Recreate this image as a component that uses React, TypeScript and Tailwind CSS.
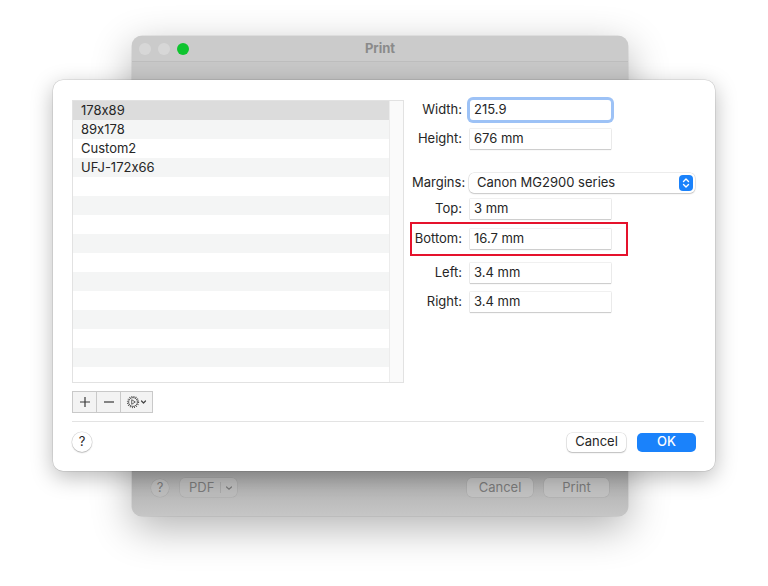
import React from "react";

const rows = ["178x89", "89x178", "Custom2", "UFJ-172x66"];

function Field({ value, focused }: { value: string; focused?: boolean }) {
  return (
    <div
      className={
        "w-[141px] h-[20px] flex items-center pl-[4px] bg-white text-[13px] text-[#262626] " +
        (focused
          ? "rounded-[3px] shadow-[0_0_0_3px_#9dc2f6]"
          : "shadow-[0_0_0_0.5px_rgba(0,0,0,0.12),0_1px_1px_rgba(0,0,0,0.14)]")
      }
    >
      {value}
    </div>
  );
}

function Row({
  label,
  children,
  boxed,
  className = "",
}: {
  label: string;
  children: React.ReactNode;
  boxed?: boolean;
  className?: string;
}) {
  return (
    <div
      className={
        "flex items-center border-2 " +
        (boxed ? "border-[#e5122c] w-[218px] py-[5px]" : "border-transparent") +
        " " +
        className
      }
    >
      <div className="w-[50px] text-right text-[13px] text-[#262626] whitespace-nowrap">{label}</div>
      <div className="ml-[8px]">{children}</div>
    </div>
  );
}

function GearIcon() {
  return (
    <svg width="22" height="14" viewBox="0 0 22 14">
      <circle cx="7" cy="7" r="5.5" fill="none" stroke="#444" strokeWidth="1.3" strokeDasharray="0.9 1.25" />
      <circle cx="7" cy="7" r="4.4" fill="none" stroke="#444" strokeWidth="0.8" />
      <path d="M5.7 4.7 L9.3 7 L5.7 9.3 Z" fill="none" stroke="#444" strokeWidth="0.8" strokeLinejoin="round" />
      <path d="M15.5 6 L17.5 8 L19.5 6" fill="none" stroke="#444" strokeWidth="1.2" strokeLinecap="round" strokeLinejoin="round" />
    </svg>
  );
}

export default function App() {
  const listRows = Array.from({ length: 15 }, (_, i) => i);
  return (
    <div
      className="relative w-[768px] h-[586px] bg-white overflow-hidden [font-feature-settings:'calt'_0]"
      style={{ fontFamily: "Inter, 'Noto Sans', 'Liberation Sans', sans-serif" }}
    >
      {/* back window */}
      <div className="absolute left-[132px] top-[36px] w-[496px] h-[480px] rounded-[10px] bg-[#c7c7c7] shadow-[0_12px_40px_rgba(0,0,0,0.3),0_0_0_0.5px_rgba(0,0,0,0.12)] flex flex-col overflow-hidden">
        <div className="h-[26px] flex items-center relative bg-[#cbcbcb] border-b border-[#bdbdbd] px-[7px] gap-[7px]">
          <div className="w-[12px] h-[12px] rounded-full bg-[#d7d7d7]" />
          <div className="w-[12px] h-[12px] rounded-full bg-[#d7d7d7]" />
          <div className="w-[12px] h-[12px] rounded-full bg-[#0ec42f]" />
          <div className="absolute inset-0 flex items-center justify-center text-[13px] font-bold text-[#8a8a8a]">
            Print
          </div>
        </div>
        <div className="flex-1" />
        <div className="h-[52px] flex items-end pb-[19px] px-[19px] bg-gradient-to-b from-[#a6a6a6] to-[#c6c6c6]">
          <div className="w-[18px] h-[18px] rounded-full bg-[#bdbdbd] shadow-[0_0_0_0.5px_rgba(0,0,0,0.08)] flex items-center justify-center text-[13px] text-[#7a7a7a]">
            ?
          </div>
          <div className="ml-[11px] w-[57px] h-[19px] rounded-[5px] bg-[#bcbcbc] shadow-[0_0_0_0.5px_rgba(0,0,0,0.08)] flex items-center text-[13px] text-[#7a7a7a]">
            <span className="pl-[9px] w-[40px]">PDF</span>
            <span className="w-px h-[11px] bg-[#a9a9a9]" />
            <svg width="16" height="10" viewBox="0 0 16 10">
              <path d="M5.5 4 L8 6.3 L10.5 4" fill="none" stroke="#7a7a7a" strokeWidth="1.2" strokeLinecap="round" />
            </svg>
          </div>
          <div className="flex-1" />
          <div className="w-[66px] h-[19px] rounded-[5px] bg-[#c2c2c2] shadow-[0_0_0_0.5px_rgba(0,0,0,0.08)] flex items-center justify-center text-[13px] text-[#7a7a7a]">
            Cancel
          </div>
          <div className="ml-[11px] w-[65px] h-[19px] rounded-[5px] bg-[#c2c2c2] shadow-[0_0_0_0.5px_rgba(0,0,0,0.08)] flex items-center justify-center text-[13px] text-[#7a7a7a]">
            Print
          </div>
        </div>
      </div>

      {/* sheet */}
      <div className="absolute left-[53px] top-[80px] w-[662px] h-[391px] rounded-[10px] bg-white shadow-[0_6px_22px_rgba(0,0,0,0.28),0_0_0_0.5px_rgba(0,0,0,0.15)] pt-[20px] pl-[19px] pr-[11px] flex flex-col">
        <div className="flex">
          {/* left column */}
          <div className="w-[332px] flex flex-col">
            <div className="h-[283px] border border-[#e2e2e2] flex overflow-hidden">
              <div className="flex-1 flex flex-col">
                {listRows.map((i) => (
                  <div
                    key={i}
                    className={
                      "h-[19px] shrink-0 flex items-center pl-[8px] text-[13px] text-[#262626] " +
                      (i === 0 ? "bg-[#dcdcdc]" : i % 2 === 1 ? "bg-[#f4f5f5]" : "bg-white")
                    }
                  >
                    {rows[i] ?? ""}
                  </div>
                ))}
              </div>
              <div className="w-[14px] bg-[#fafafa] border-l border-[#ececec]" />
            </div>
            <div className="mt-[8px] flex h-[22px] w-fit border border-[#c9c9c9] bg-[#f3f3f3]">
              <div className="w-[24px] flex items-center justify-center border-r border-[#c9c9c9]">
                <svg width="12" height="12" viewBox="0 0 12 12">
                  <path d="M6 1 V11 M1 6 H11" stroke="#3a3a3a" strokeWidth="1.2" />
                </svg>
              </div>
              <div className="w-[24px] flex items-center justify-center border-r border-[#c9c9c9]">
                <svg width="12" height="12" viewBox="0 0 12 12">
                  <path d="M1 6 H11" stroke="#3a3a3a" strokeWidth="1.2" />
                </svg>
              </div>
              <div className="w-[31px] flex items-center justify-center">
                <GearIcon />
              </div>
            </div>
          </div>

          {/* right column */}
          <div className="ml-[6px] flex flex-col">
            <Row label="Width:" className="-mt-[2px]">
              <Field value="215.9" focused />
            </Row>
            <Row label="Height:" className="mt-[5px]">
              <Field value="676 mm" />
            </Row>
            <Row label="Margins:" className="mt-[20px]">
              <div className="-ml-[1px] w-[226px] h-[20px] rounded-[5px] bg-white shadow-[0_0_0_0.5px_rgba(0,0,0,0.14),0_1px_1.5px_rgba(0,0,0,0.16)] flex items-center pl-[8px] pr-[2px] text-[13px] text-[#262626]">
                <span className="flex-1">Canon MG2900 series</span>
                <div className="w-[14px] h-[16px] rounded-[4px] bg-[#1a82fb] flex items-center justify-center">
                  <svg width="10" height="12" viewBox="0 0 10 12">
                    <path d="M2.5 4.5 L5 2 L7.5 4.5 M2.5 7.5 L5 10 L7.5 7.5" fill="none" stroke="white" strokeWidth="1.4" strokeLinecap="round" strokeLinejoin="round" />
                  </svg>
                </div>
              </div>
            </Row>
            <Row label="Top:" className="mt-[2px]">
              <Field value="3 mm" />
            </Row>
            <Row label="Bottom:" boxed className="mt-[1px]">
              <Field value="16.7 mm" />
            </Row>
            <Row label="Left:" className="mt-[5px]">
              <Field value="3.4 mm" />
            </Row>
            <Row label="Right:" className="mt-[5px]">
              <Field value="3.4 mm" />
            </Row>
          </div>
        </div>

        <div className="mt-[8px] h-px bg-[#e3e3e3]" />

        <div className="mt-[10px] flex items-center pr-[8px]">
          <div className="w-[20px] h-[20px] rounded-full bg-white shadow-[0_0_0_0.5px_rgba(0,0,0,0.15),0_1px_1.5px_rgba(0,0,0,0.2)] flex items-center justify-center text-[13px] text-[#262626]">
            ?
          </div>
          <div className="flex-1" />
          <div className="w-[59px] h-[19px] rounded-[5px] bg-white shadow-[0_0_0_0.5px_rgba(0,0,0,0.15),0_1px_1.5px_rgba(0,0,0,0.2)] flex items-center justify-center text-[13px] text-[#262626]">
            Cancel
          </div>
          <div className="ml-[11px] w-[59px] h-[19px] rounded-[5px] bg-[#1a82fb] flex items-center justify-center text-[13px] font-medium text-white">
            OK
          </div>
        </div>
      </div>
    </div>
  );
}
